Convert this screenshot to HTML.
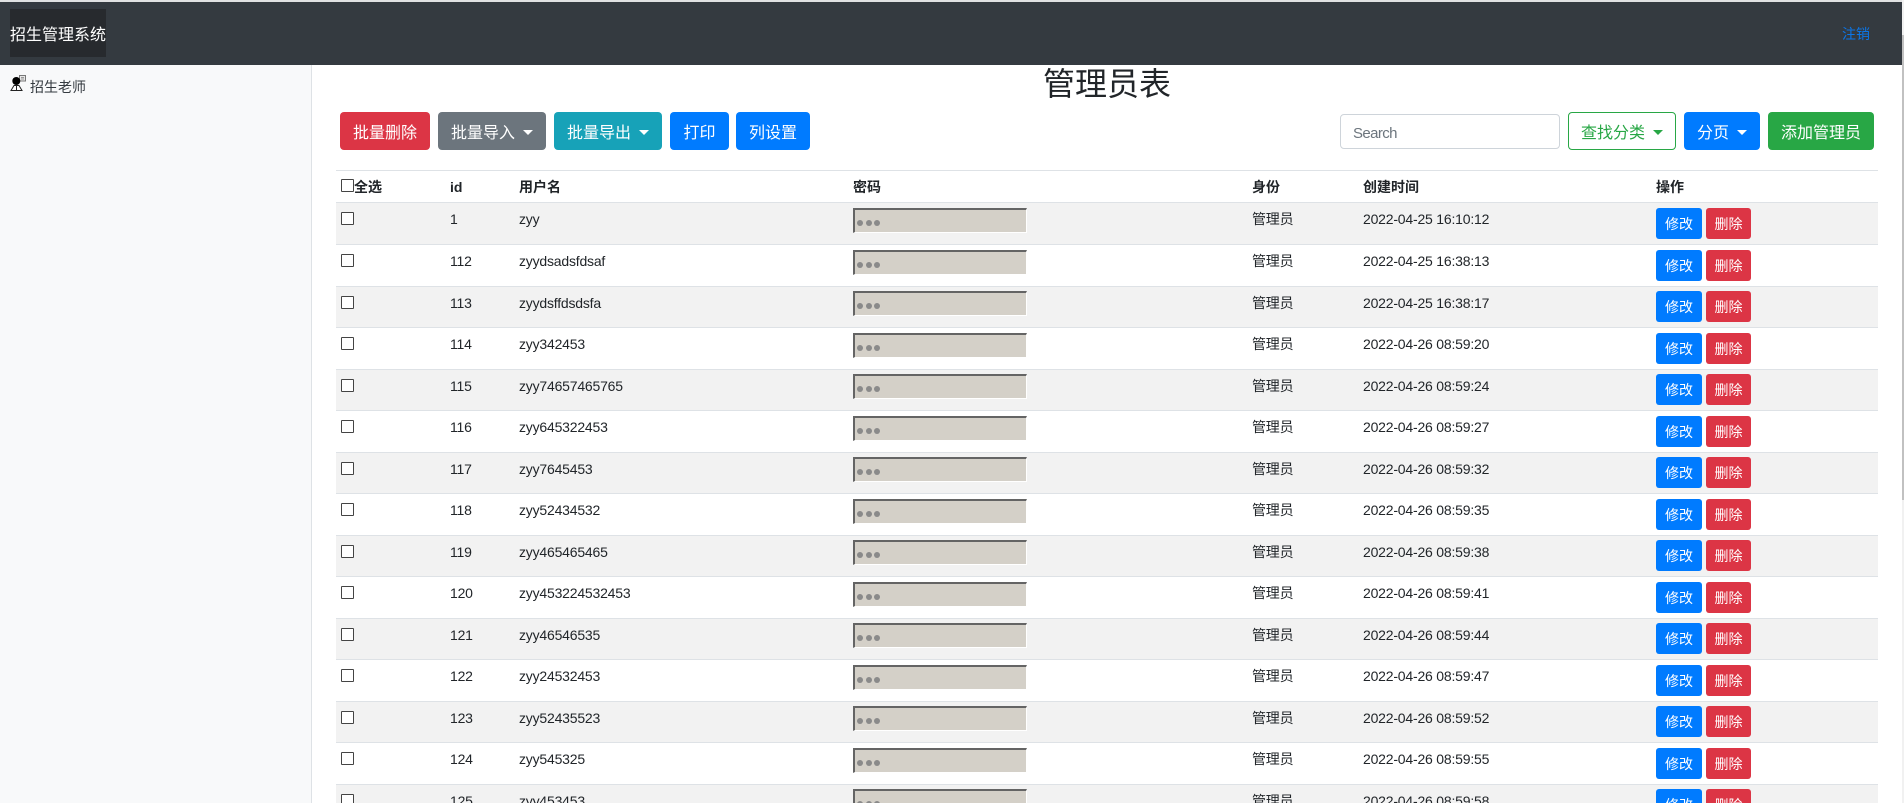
<!DOCTYPE html>
<html lang="zh-CN">
<head>
<meta charset="utf-8">
<title>管理员表</title>
<style>
*{box-sizing:border-box}
html,body{margin:0;padding:0;width:1904px;height:803px;overflow:hidden;background:#fff}
body{position:relative;font-family:"Liberation Sans","Noto Sans CJK SC",sans-serif;color:#212529;font-size:14px}
.top{position:absolute;left:0;top:0;width:1904px;height:2px;background:#e0e1e2}
.nav{position:absolute;left:0;top:2px;width:1903px;height:63px;background:#343a40}
.brand{position:absolute;left:10px;top:7px;width:96px;height:48px;background:#272a2e;color:#fff;font-size:16px;line-height:53px;white-space:nowrap}
.out{position:absolute;left:1842px;top:22px;color:#0b76e8;line-height:21px}
.side{position:absolute;left:0;top:65px;width:312px;height:738px;background:#f8f9fa;border-right:1px solid #dee2e6}
.side svg{position:absolute;left:10px;top:9px}
.side span{position:absolute;left:30px;top:11.500px;line-height:21px;color:#343a40}
h1{position:absolute;left:1043px;top:60px;margin:0;font-size:32px;font-weight:400;line-height:48px;white-space:nowrap}
.btn{position:absolute;top:112px;height:38px;border-radius:4px;color:#fff;font-size:16px;line-height:42px;border:1px solid transparent;text-align:center;white-space:nowrap}
.caret{display:inline-block;width:0;height:0;margin-left:8px;vertical-align:3px;border-top:5px solid;border-left:5px solid transparent;border-right:5px solid transparent}
.red{background:#dc3545}.gray{background:#6c757d}.teal{background:#17a2b8}.blue{background:#007bff}.green{background:#28a745}
.outline{background:#fff;border-color:#28a745;color:#28a745}
.search{position:absolute;left:1340px;top:114px;width:220px;height:35px;border:1px solid #ced4da;border-radius:4px;padding-left:12px;line-height:37px;font-size:15px;letter-spacing:-.6px;color:#6c757d;background:#fff}
.hl{position:absolute;left:336px;top:170px;width:1542px;height:1px;background:#dee2e6}
.hb{position:absolute;left:336px;top:202px;width:1542px;height:2px;background:#dee2e6}
.h{position:absolute;top:177px;font-weight:700;line-height:21px;white-space:nowrap}
.cb{position:absolute;width:13px;height:13px;border:1px solid #444;background:#fff;border-radius:1px}
.rows{position:absolute;left:336px;top:202.500px;width:1542px}
.r{position:relative;height:41.500px;border-top:1px solid #dee2e6}
.r:first-child{border-top:0}
.r:nth-child(odd){background:#f2f2f2}
.r .cb{left:5px;top:9px}
.r b{position:absolute;top:6px;font-weight:400;line-height:21px;white-space:nowrap;letter-spacing:-.2px}
.a{left:114px}.u{left:183px}.g{left:916px}.t{left:1027px}
.p{position:absolute;left:517px;top:4.750px;width:174px;height:25px;background:#d4d0c8;border-style:solid;border-width:2px 1px 1px 2px;border-color:#646464 #fff #fff #646464}
.p i{position:absolute;top:10px;width:6px;height:6px;border-radius:50%;background:#8a8a8a}
.p i:nth-child(1){left:2px}.p i:nth-child(2){left:10.500px}.p i:nth-child(3){left:19px}
.s{position:absolute;top:4.750px;height:31px;border-radius:3px;color:#fff;font-size:14px;line-height:33px;text-align:center}
.r:first-child .s,.r:first-child .p{top:5.500px}
.e{left:1320px;width:46px;background:#007bff}
.d{left:1370px;width:45px;background:#dc3545}
.sb{position:absolute;left:1902px;top:0;width:2px;height:803px;background:#f1f1f1}
.th{position:absolute;left:1902px;top:35px;width:2px;height:465px;background:#c1c1c1}
</style>
</head>
<body>
<div class="top"></div>
<div class="nav"><div class="brand">招生管理系统</div><div class="out">注销</div></div>
<div class="side">
<svg width="17" height="17" viewBox="0 0 17 17"><rect x="9.500" y="1.500" width="6" height="5.500" fill="#e8e8e8" stroke="#777" stroke-width="1"/><path d="M11 3.500h3M11 5h3" stroke="#999" fill="none"/><circle cx="6.300" cy="7" r="4" fill="#000"/><path d="M4 11.500h5l3 5h-11z" fill="#fff" stroke="#222" stroke-width="1"/><path d="M6.500 11.500v5" stroke="#222"/></svg>
<span>招生老师</span>
</div>
<h1>管理员表</h1>
<div class="btn red" style="left:340px;width:90px">批量删除</div>
<div class="btn gray" style="left:438px;width:108px">批量导入<span class="caret"></span></div>
<div class="btn teal" style="left:554px;width:108px">批量导出<span class="caret"></span></div>
<div class="btn blue" style="left:670px;width:59px">打印</div>
<div class="btn blue" style="left:736px;width:74px">列设置</div>
<div class="search">Search</div>
<div class="btn outline" style="left:1568px;width:108px">查找分类<span class="caret"></span></div>
<div class="btn blue" style="left:1684px;width:76px">分页<span class="caret"></span></div>
<div class="btn green" style="left:1768px;width:106px">添加管理员</div>
<div class="hl"></div>
<div class="cb" style="left:341px;top:179px"></div>
<div class="h" style="left:354px">全选</div>
<div class="h" style="left:450px">id</div>
<div class="h" style="left:519px">用户名</div>
<div class="h" style="left:853px">密码</div>
<div class="h" style="left:1252px">身份</div>
<div class="h" style="left:1363px">创建时间</div>
<div class="h" style="left:1656px">操作</div>
<div class="hb"></div>
<div class="rows">
<div class="r"><div class="cb"></div><b class="a">1</b><b class="u">zyy</b><div class="p"><i></i><i></i><i></i></div><b class="g">管理员</b><b class="t">2022-04-25 16:10:12</b><div class="s e">修改</div><div class="s d">删除</div></div>
<div class="r"><div class="cb"></div><b class="a">112</b><b class="u">zyydsadsfdsaf</b><div class="p"><i></i><i></i><i></i></div><b class="g">管理员</b><b class="t">2022-04-25 16:38:13</b><div class="s e">修改</div><div class="s d">删除</div></div>
<div class="r"><div class="cb"></div><b class="a">113</b><b class="u">zyydsffdsdsfa</b><div class="p"><i></i><i></i><i></i></div><b class="g">管理员</b><b class="t">2022-04-25 16:38:17</b><div class="s e">修改</div><div class="s d">删除</div></div>
<div class="r"><div class="cb"></div><b class="a">114</b><b class="u">zyy342453</b><div class="p"><i></i><i></i><i></i></div><b class="g">管理员</b><b class="t">2022-04-26 08:59:20</b><div class="s e">修改</div><div class="s d">删除</div></div>
<div class="r"><div class="cb"></div><b class="a">115</b><b class="u">zyy74657465765</b><div class="p"><i></i><i></i><i></i></div><b class="g">管理员</b><b class="t">2022-04-26 08:59:24</b><div class="s e">修改</div><div class="s d">删除</div></div>
<div class="r"><div class="cb"></div><b class="a">116</b><b class="u">zyy645322453</b><div class="p"><i></i><i></i><i></i></div><b class="g">管理员</b><b class="t">2022-04-26 08:59:27</b><div class="s e">修改</div><div class="s d">删除</div></div>
<div class="r"><div class="cb"></div><b class="a">117</b><b class="u">zyy7645453</b><div class="p"><i></i><i></i><i></i></div><b class="g">管理员</b><b class="t">2022-04-26 08:59:32</b><div class="s e">修改</div><div class="s d">删除</div></div>
<div class="r"><div class="cb"></div><b class="a">118</b><b class="u">zyy52434532</b><div class="p"><i></i><i></i><i></i></div><b class="g">管理员</b><b class="t">2022-04-26 08:59:35</b><div class="s e">修改</div><div class="s d">删除</div></div>
<div class="r"><div class="cb"></div><b class="a">119</b><b class="u">zyy465465465</b><div class="p"><i></i><i></i><i></i></div><b class="g">管理员</b><b class="t">2022-04-26 08:59:38</b><div class="s e">修改</div><div class="s d">删除</div></div>
<div class="r"><div class="cb"></div><b class="a">120</b><b class="u">zyy453224532453</b><div class="p"><i></i><i></i><i></i></div><b class="g">管理员</b><b class="t">2022-04-26 08:59:41</b><div class="s e">修改</div><div class="s d">删除</div></div>
<div class="r"><div class="cb"></div><b class="a">121</b><b class="u">zyy46546535</b><div class="p"><i></i><i></i><i></i></div><b class="g">管理员</b><b class="t">2022-04-26 08:59:44</b><div class="s e">修改</div><div class="s d">删除</div></div>
<div class="r"><div class="cb"></div><b class="a">122</b><b class="u">zyy24532453</b><div class="p"><i></i><i></i><i></i></div><b class="g">管理员</b><b class="t">2022-04-26 08:59:47</b><div class="s e">修改</div><div class="s d">删除</div></div>
<div class="r"><div class="cb"></div><b class="a">123</b><b class="u">zyy52435523</b><div class="p"><i></i><i></i><i></i></div><b class="g">管理员</b><b class="t">2022-04-26 08:59:52</b><div class="s e">修改</div><div class="s d">删除</div></div>
<div class="r"><div class="cb"></div><b class="a">124</b><b class="u">zyy545325</b><div class="p"><i></i><i></i><i></i></div><b class="g">管理员</b><b class="t">2022-04-26 08:59:55</b><div class="s e">修改</div><div class="s d">删除</div></div>
<div class="r"><div class="cb"></div><b class="a">125</b><b class="u">zyy453453</b><div class="p"><i></i><i></i><i></i></div><b class="g">管理员</b><b class="t">2022-04-26 08:59:58</b><div class="s e">修改</div><div class="s d">删除</div></div>
</div>
<div class="sb"></div>
<div class="th"></div>
</body>
</html>
